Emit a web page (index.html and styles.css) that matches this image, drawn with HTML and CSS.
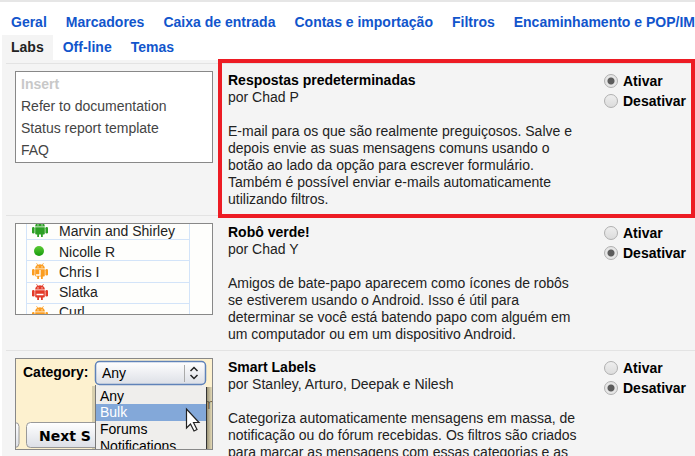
FILE: index.html
```html
<!DOCTYPE html>
<html lang="pt-BR">
<head>
<meta charset="utf-8">
<title>Labs</title>
<link rel="stylesheet" href="styles.css">
</head>
<body>
<nav class="tabs">
  <div class="tab-row">
    <a class="tab" href="#geral">Geral</a>
    <a class="tab" href="#marcadores">Marcadores</a>
    <a class="tab" href="#caixa">Caixa de entrada</a>
    <a class="tab" href="#contas">Contas e importação</a>
    <a class="tab" href="#filtros">Filtros</a>
    <a class="tab" href="#pop">Encaminhamento e POP/IMAP</a>
  </div>
  <div class="tab-row">
    <a class="tab tab-active" href="#labs">Labs</a>
    <a class="tab" href="#offline">Off-line</a>
    <a class="tab" href="#temas">Temas</a>
  </div>
</nav>
<main class="panel">
  <section class="lab lab-marked">
    <div class="thumb menu">
      <span class="menu-title">Insert</span>
      <span>Refer to documentation</span>
      <span>Status report template</span>
      <span>FAQ</span>
    </div>
    <div class="info">
      <h2 class="name">Respostas predeterminadas</h2>
      <p class="author">por Chad P</p>
      <p class="text">E-mail para os que são realmente preguiçosos. Salve e<br>depois envie as suas mensagens comuns usando o<br>botão ao lado da opção para escrever formulário.<br>Também é possível enviar e-mails automaticamente<br>utilizando filtros.</p>
    </div>
    <div class="choice">
      <label class="option"><input type="radio" name="respostas" checked>Ativar</label>
      <label class="option"><input type="radio" name="respostas">Desativar</label>
    </div>
  </section>
  <section class="lab">
    <div class="thumb">
      <svg class="art" viewBox="0 0 196 90" role="img" aria-label="Amigos do bate-papo">
        <defs>
          <linearGradient id="dot" x1="0" y1="0" x2="0" y2="1"><stop offset="0" stop-color="#5ccb35"/><stop offset="1" stop-color="#159a0c"/></linearGradient>
          <g id="robot">
            <path d="M3.200 5.500C3.200 3.600 4.200 2.500 5.300 2L4.200.3l.5-.3L6 1.700a6 6 0 0 1 4 0L11.300 0l.5.3L10.700 2c1.200.5 2.100 1.600 2.100 3.500z"/>
            <path d="M3.200 6.200h9.600v6.400a1 1 0 0 1-1 1h-1V16H9v-2.400H7V16H5.200v-2.400h-1a1 1 0 0 1-1-1z"/>
            <rect x="0" y="6" width="2.600" height="6.500" rx="1.200"/>
            <rect x="13.400" y="6" width="2.600" height="6.500" rx="1.200"/>
            <circle cx="6" cy="3.900" r=".6" fill="#fff"/><circle cx="10" cy="3.900" r=".6" fill="#fff"/>
          </g>
        </defs>
        <rect width="196" height="90" fill="#fefefc"/>
        <path d="M10.500 0v90M173.500 0v90M10 15.500h163M10 36.500h163M10 58.500h163M10 79.500h163" stroke="#d3e4f9" fill="none"/>
        <use href="#robot" x="16" y="-3" fill="#2c9f25"/>
        <circle cx="23" cy="27" r="5" fill="url(#dot)"/>
        <use href="#robot" x="16" y="39" fill="#fb9d20"/>
        <path d="M24 46v5h-4" stroke="#fff" stroke-width="1.300" fill="none"/>
        <use href="#robot" x="16" y="60" fill="#e33a28"/>
        <path d="M20.500 70.500h7" stroke="#fff" stroke-width="1.500"/>
        <use href="#robot" x="16" y="82" fill="#fb9d20"/>
        <g class="chat-names">
          <text x="43" y="12">Marvin and Shirley</text>
          <text x="43" y="33">Nicolle R</text>
          <text x="43" y="53">Chris I</text>
          <text x="43" y="73">Slatka</text>
          <text x="43" y="93">Curl</text>
        </g>
      </svg>
    </div>
    <div class="info">
      <h2 class="name">Robô verde!</h2>
      <p class="author">por Chad Y</p>
      <p class="text">Amigos de bate-papo aparecem como ícones de robôs<br>se estiverem usando o Android. Isso é útil para<br>determinar se você está batendo papo com alguém em<br>um computador ou em um dispositivo Android.</p>
    </div>
    <div class="choice">
      <label class="option"><input type="radio" name="robo">Ativar</label>
      <label class="option"><input type="radio" name="robo" checked>Desativar</label>
    </div>
  </section>
  <section class="lab">
    <div class="thumb">
      <svg class="art" viewBox="0 0 196 90" role="img" aria-label="Escolha de categoria">
        <defs>
          <linearGradient id="face" x1="0" y1="0" x2="0" y2="1"><stop offset="0" stop-color="#fff"/><stop offset="1" stop-color="#dcdfe6"/></linearGradient>
          <linearGradient id="shade"><stop offset="0" stop-color="#8d866c"/><stop offset="1" stop-color="#e5dbb8"/></linearGradient>
        </defs>
        <rect width="196" height="90" fill="#fdf1cf"/>
        <rect x="76" y="27" width="4" height="63" fill="#d8cfae"/>
        <rect x="-20" y="63.500" width="23" height="25" rx="4" fill="url(#face)" stroke="#999"/>
        <rect x="10.500" y="63.500" width="90" height="25" rx="4" fill="url(#face)" stroke="#999"/>
        <text class="pic-next" x="23" y="82">Next S</text>
        <text class="pic-label" x="7" y="18">Category:</text>
        <rect x="190" y="28" width="6" height="62" fill="url(#shade)"/>
        <text class="pic-item" x="187" y="50" fill="#665e45">m</text>
        <rect x="80" y="26" width="110" height="64" fill="#efeeec"/>
        <path d="M79.500 26v64" stroke="#777"/>
        <path d="M190.500 28v62" stroke="#333"/>
        <rect x="80" y="45" width="110" height="17" fill="#83a8d9"/>
        <rect x="79.500" y="2.500" width="110" height="23" rx="4" fill="url(#face)" stroke="#5f82b8" stroke-width="1.500"/>
        <path d="M168.500 6v17" stroke="#aaa"/>
        <path d="M174.500 12l3.500-3.500 3.500 3.500M174.500 16l3.500 3.500 3.500-3.500" fill="none" stroke="#222" stroke-width="1.500"/>
        <g class="pic-item">
          <text x="86" y="19">Any</text>
          <text x="84" y="42">Any</text>
          <text x="84" y="58" fill="#fff">Bulk</text>
          <text x="84" y="75">Forums</text>
          <text x="84" y="92">Notifications</text>
        </g>
        <path d="M170.500 50v19l4-4 3.500 7 3-1.500-3.500-7h5.500z" fill="#fff" stroke="#222" stroke-width="1.200"/>
      </svg>
    </div>
    <div class="info">
      <h2 class="name">Smart Labels</h2>
      <p class="author">por Stanley, Arturo, Deepak e Nilesh</p>
      <p class="text">Categoriza automaticamente mensagens em massa, de<br>notificação ou do fórum recebidas. Os filtros são criados<br>para marcar as mensagens com essas categorias e as</p>
    </div>
    <div class="choice">
      <label class="option"><input type="radio" name="smart">Ativar</label>
      <label class="option"><input type="radio" name="smart" checked>Desativar</label>
    </div>
  </section>
</main>
</body>
</html>
```
FILE: styles.css
```css
* { box-sizing: border-box; }
html { height: 100%; overflow: hidden; }
body {
  margin: 0;
  min-height: 100%;
  background: #fff;
  border-top: 2px solid #e6e6e6;
  font-family: "Liberation Sans", Arial, sans-serif;
  font-size: 14px;
  line-height: 17px;
  color: #222;
}
.tabs { padding: 8px 0 0 2px; }
.tab-row { display: flex; gap: 1px; }
.tab {
  flex: none;
  padding: 0 9px;
  line-height: 25px;
  font-weight: bold;
  color: #15c;
  text-decoration: none;
}
.tab-active { background: #f4f4f4; color: #222; }
.panel {
  margin-left: 2px;
  padding: 3px 0 0 4px;
  min-height: 400px;
  background: #f4f4f4;
}
.lab {
  position: relative;
  display: grid;
  grid-template-columns: 198px minmax(0, 1fr) 91px;
  padding: 7px 0 7px 9px;
  border-top: 1px solid #e3e3e3;
}
.lab-marked::after {
  content: "";
  position: absolute;
  z-index: 1;
  inset: -5px 0 -3px 212px;
  border: 4px solid #ed1c24;
  pointer-events: none;
}
.thumb {
  height: 92px;
  border: 1px solid #888;
  background: #fff;
  overflow: hidden;
}
.menu {
  display: flex;
  flex-direction: column;
  padding: 1px 5px;
  line-height: 22px;
  color: #444;
}
.menu-title { font-weight: bold; color: #c8c8c8; }
.art { display: block; width: 100%; height: 100%; }
.chat-names { font-size: 14px; fill: #222; }
.pic-label { font-size: 14px; font-weight: bold; }
.pic-item { font-size: 14px; }
.pic-next { font-family: "DejaVu Sans", sans-serif; font-size: 14px; font-weight: bold; }
.info { padding-left: 15px; white-space: nowrap; }
.name {
  margin: 0;
  font-size: 14px;
  line-height: 18px;
  color: #000;
}
.author { margin: 0 0 17px; }
.text { margin: 0; }
.choice { display: flex; flex-direction: column; }
.option {
  display: flex;
  align-items: center;
  gap: 5px;
  line-height: 20px;
  font-weight: bold;
  color: #000;
}
.option input {
  appearance: none;
  flex: none;
  width: 14px;
  height: 14px;
  margin: 0;
  border: 1px solid #b0b0b0;
  border-radius: 50%;
  background: linear-gradient(#eee, #dcdcdc);
}
.option input:checked {
  background: radial-gradient(circle, #5c5c5c 3px, #e6e6e6 4px);
}
```
